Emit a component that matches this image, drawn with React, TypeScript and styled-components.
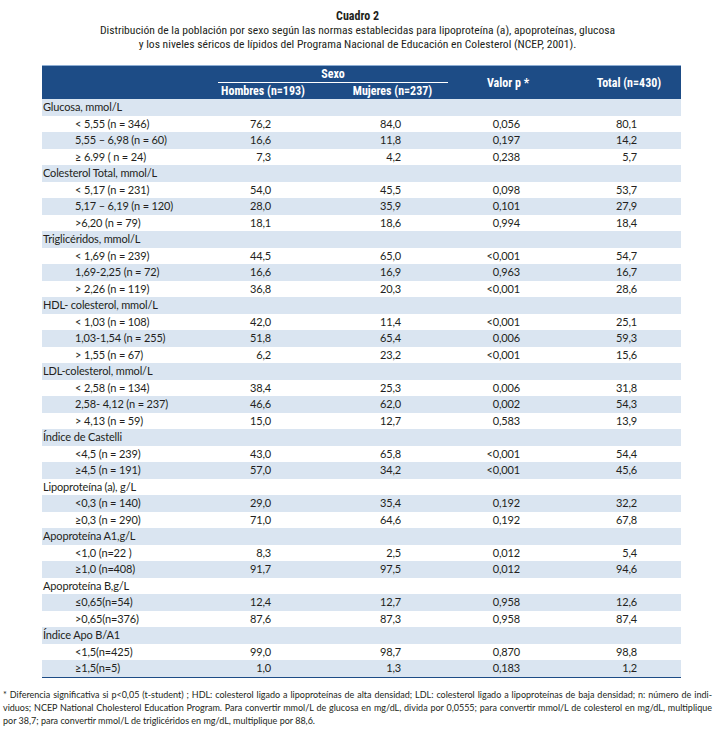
import React from 'react';
import styled, { createGlobalStyle } from 'styled-components';

const Global = createGlobalStyle`
  html, body { margin: 0; padding: 0; background: #ffffff; }
  body { width: 715px; height: 729px; overflow: hidden; }
`;

const Page = styled.div`
  width: 715px;
  height: 729px;
  box-sizing: border-box;
  padding-top: 9px;
  display: flex;
  flex-direction: column;
  color: #231f20;
  font-family: Lato, "Open Sans", sans-serif;
`;

const Caption = styled.header`
  font-family: Roboto, sans-serif;
  font-stretch: 75%;
  font-size: 11.6px;
  line-height: 14px;
  text-align: center;
  color: #231f20;
`;

const CaptionTitle = styled.div`
  font-weight: 700;
  font-size: 12px;
`;

const CaptionText = styled.div``;

const Table = styled.div`
  margin: 14px 0 0 42px;
  width: 639px;
  border-bottom: 1.5px solid #1d4c86;
`;

const cols = '176px 90px 141px 118px 114px';

const HeaderGrid = styled.div`
  display: grid;
  grid-template-columns: ${cols};
  grid-template-rows: 17px 16px;
  background: #1d4c86;
  border-top: 1px solid #8eaed3;
  color: #ffffff;
  font-family: Roboto, sans-serif;
  font-stretch: 80%;
  font-weight: 700;
  font-size: 12px;
`;

const HeadCell = styled.div<{ $col: string; $row: string; $line?: boolean; $pl?: number }>`
  grid-column: ${(p) => p.$col};
  grid-row: ${(p) => p.$row};
  display: flex;
  align-items: center;
  justify-content: center;
  padding-left: ${(p) => p.$pl ?? 0}px;
  ${(p) => (p.$line ? 'border-bottom: 1px solid #ffffff; margin-right: 1px;' : '')}
`;

const Row = styled.div<{ $shaded: boolean }>`
  display: grid;
  grid-template-columns: ${cols};
  height: 16.5px;
  align-items: center;
  background: ${(p) => (p.$shaded ? '#dae5f1' : '#ffffff')};
  font-size: 11px;
  letter-spacing: -0.15px;
  line-height: 16px;
`;

const Label = styled.div<{ $indent: boolean }>`
  padding-left: ${(p) => (p.$indent ? '33px' : '1px')};
  white-space: nowrap;
`;

const Value = styled.div<{ $pr: number }>`
  text-align: right;
  padding-right: ${(p) => p.$pr}px;
  white-space: nowrap;
`;

const Note = styled.footer`
  margin: 10px 3px 0 3px;
  font-size: 9px;
  line-height: 13px;
`;

const NoteLine = styled.div<{ $last?: boolean }>`
  white-space: nowrap;
  text-align: ${(p) => (p.$last ? 'left' : 'justify')};
  text-align-last: ${(p) => (p.$last ? 'left' : 'justify')};
`;

type R = { label: string; cat?: boolean; v?: [string, string, string, string] };

const rows: R[] = [
  { label: 'Glucosa, mmol/L', cat: true },
  { label: '< 5,55 (n = 346)', v: ['76,2', '84,0', '0,056', '80,1'] },
  { label: '5,55 – 6,98 (n = 60)', v: ['16,6', '11,8', '0,197', '14,2'] },
  { label: '≥ 6.99 ( n = 24)', v: ['7,3', '4,2', '0,238', '5,7'] },
  { label: 'Colesterol Total, mmol/L', cat: true },
  { label: '< 5,17 (n = 231)', v: ['54,0', '45,5', '0,098', '53,7'] },
  { label: '5,17 – 6,19 (n = 120)', v: ['28,0', '35,9', '0,101', '27,9'] },
  { label: '>6,20 (n = 79)', v: ['18,1', '18,6', '0,994', '18,4'] },
  { label: 'Triglicéridos, mmol/L', cat: true },
  { label: '< 1,69 (n = 239)', v: ['44,5', '65,0', '<0,001', '54,7'] },
  { label: '1,69-2,25 (n = 72)', v: ['16,6', '16,9', '0,963', '16,7'] },
  { label: '> 2,26 (n = 119)', v: ['36,8', '20,3', '<0,001', '28,6'] },
  { label: 'HDL- colesterol, mmol/L', cat: true },
  { label: '< 1,03 (n = 108)', v: ['42,0', '11,4', '<0,001', '25,1'] },
  { label: '1,03-1,54 (n = 255)', v: ['51,8', '65,4', '0,006', '59,3'] },
  { label: '> 1,55 (n = 67)', v: ['6,2', '23,2', '<0,001', '15,6'] },
  { label: 'LDL-colesterol, mmol/L', cat: true },
  { label: '< 2,58 (n = 134)', v: ['38,4', '25,3', '0,006', '31,8'] },
  { label: '2,58- 4,12 (n = 237)', v: ['46,6', '62,0', '0,002', '54,3'] },
  { label: '> 4,13 (n = 59)', v: ['15,0', '12,7', '0,583', '13,9'] },
  { label: 'Índice de Castelli', cat: true },
  { label: '<4,5 (n = 239)', v: ['43,0', '65,8', '<0,001', '54,4'] },
  { label: '≥4,5 (n = 191)', v: ['57,0', '34,2', '<0,001', '45,6'] },
  { label: 'Lipoproteína (a), g/L', cat: true },
  { label: '<0,3 (n = 140)', v: ['29,0', '35,4', '0,192', '32,2'] },
  { label: '≥0,3 (n = 290)', v: ['71,0', '64,6', '0,192', '67,8'] },
  { label: 'Apoproteína A1,g/L', cat: true },
  { label: '<1,0 (n=22 )', v: ['8,3', '2,5', '0,012', '5,4'] },
  { label: '≥1,0 (n=408)', v: ['91,7', '97,5', '0,012', '94,6'] },
  { label: 'Apoproteína B,g/L', cat: true },
  { label: '≤0,65(n=54)', v: ['12,4', '12,7', '0,958', '12,6'] },
  { label: '>0,65(n=376)', v: ['87,6', '87,3', '0,958', '87,4'] },
  { label: 'Índice Apo B/A1', cat: true },
  { label: '<1,5(n=425)', v: ['99,0', '98,7', '0,870', '98,8'] },
  { label: '≥1,5(n=5)', v: ['1,0', '1,3', '0,183', '1,2'] },
];

const pads = [37, 48, 47, 44];

export default function App() {
  return (
    <Page>
      <Global />
      <Caption>
        <CaptionTitle>Cuadro 2</CaptionTitle>
        <CaptionText>
          Distribución de la población por sexo según las normas establecidas para lipoproteína (a), apoproteínas, glucosa
        </CaptionText>
        <CaptionText>
          y los niveles séricos de lípidos del Programa Nacional de Educación en Colesterol (NCEP, 2001).
        </CaptionText>
      </Caption>
      <Table>
        <HeaderGrid>
          <HeadCell $col="1" $row="1 / span 2" />
          <HeadCell $col="2 / span 2" $row="1" $line>Sexo</HeadCell>
          <HeadCell $col="2" $row="2">Hombres (n=193)</HeadCell>
          <HeadCell $col="3" $row="2" $pl={28}>Mujeres (n=237)</HeadCell>
          <HeadCell $col="4" $row="1 / span 2">Valor p *</HeadCell>
          <HeadCell $col="5" $row="1 / span 2" $pl={10}>Total (n=430)</HeadCell>
        </HeaderGrid>
        {rows.map((r, i) => (
          <Row key={i} $shaded={i % 2 === 0}>
            <Label $indent={!r.cat}>{r.label}</Label>
            {r.v
              ? r.v.map((x, j) => (
                  <Value key={j} $pr={pads[j]}>
                    {x}
                  </Value>
                ))
              : null}
          </Row>
        ))}
      </Table>
      <Note>
        <NoteLine>
          * Diferencia significativa si p&lt;0,05 (t-student) ; HDL: colesterol ligado a lipoproteínas de alta densidad; LDL: colesterol ligado a lipoproteínas de baja densidad; n: número de indi-
        </NoteLine>
        <NoteLine>
          viduos; NCEP National Cholesterol Education Program. Para convertir mmol/L de glucosa en mg/dL, divida por 0,0555; para convertir mmol/L de colesterol en mg/dL, multiplique
        </NoteLine>
        <NoteLine $last>
          por 38,7; para convertir mmol/L de triglicéridos en mg/dL, multiplique por 88,6.
        </NoteLine>
      </Note>
    </Page>
  );
}
